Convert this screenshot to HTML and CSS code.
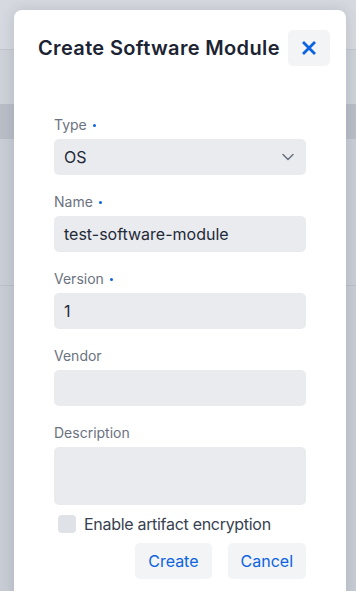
FILE: index.html
```html
<!DOCTYPE html>
<html>
<head>
<meta charset="utf-8">
<link rel="stylesheet" href="styles.css">
</head>
<body>
<div class="page">
  <div class="topbar"></div>
  <div class="subbar"></div>
  <div class="thead"></div>
  <div class="rows"></div>
  <div class="rest"></div>
</div>
<div class="modal">
  <div class="modal-header">
    <h2 class="title">Create Software Module</h2>
    <button class="close" aria-label="Close">
      <svg width="14" height="14" viewBox="0 0 14 14"><path d="M2 2 L12 12 M12 2 L2 12" stroke="#0b63e0" stroke-width="2.8" stroke-linecap="square" fill="none"/></svg>
    </button>
  </div>
  <form class="form">
    <div class="field">
      <label class="label">Type<span class="req"></span></label>
      <div class="input select">
        <span>OS</span>
        <svg width="12" height="8" viewBox="0 0 12 8"><path d="M1 1.5 L6 6.5 L11 1.5" stroke="#6b7280" stroke-width="1.5" fill="none" stroke-linecap="round" stroke-linejoin="round"/></svg>
      </div>
    </div>
    <div class="field">
      <label class="label">Name<span class="req"></span></label>
      <div class="input">test-software-module</div>
    </div>
    <div class="field">
      <label class="label">Version<span class="req"></span></label>
      <div class="input">1</div>
    </div>
    <div class="field">
      <label class="label">Vendor</label>
      <div class="input"></div>
    </div>
    <div class="field last">
      <label class="label">Description</label>
      <div class="input textarea"></div>
    </div>
    <div class="check-row">
      <span class="checkbox"></span>
      <span class="check-label">Enable artifact encryption</span>
    </div>
    <div class="actions">
      <button type="button" class="btn">Create</button>
      <button type="button" class="btn">Cancel</button>
    </div>
  </form>
</div>
</body>
</html>
```
FILE: styles.css
```css
* { box-sizing: border-box; }
html, body { margin: 0; padding: 0; }
body {
  width: 356px;
  height: 591px;
  overflow: hidden;
  position: relative;
  font-family: Inter, "Noto Sans", sans-serif;
}
.page {
  display: flex;
  flex-direction: column;
  height: 591px;
}
.topbar { height: 50px; background: #d6d9df; border-bottom: 1px solid #c2c6cd; }
.subbar { height: 54px; background: #cdd1d8; }
.thead { height: 35px; background: #b9bdc6; }
.rows { height: 147px; background: #c9cdd5; border-bottom: 1px solid #bcc0c8; }
.rest { flex: 1; background: #c8ccd4; }

.modal {
  position: absolute;
  top: 10px;
  left: 14px;
  width: 332px;
  bottom: -20px;
  background: #fff;
  border-radius: 8px;
  box-shadow: 0 0 14px rgba(60, 70, 90, 0.18);
}
.modal-header {
  display: flex;
  justify-content: space-between;
  align-items: center;
  padding: 20px 16px 0 24px;
}
.title {
  margin: 0;
  font-size: 20px;
  line-height: 36px;
  font-weight: 600;
  color: #1c2433;
  letter-spacing: 0.35px;
}
.close {
  width: 42px;
  height: 36px;
  border: 0;
  border-radius: 5px;
  background: #f3f4f6;
  display: flex;
  align-items: center;
  justify-content: center;
  padding: 0;
}
.form {
  padding: 49px 40px 0 40px;
  display: flex;
  flex-direction: column;
}
.field { display: flex; flex-direction: column; margin-bottom: 17px; }
.field.last { margin-bottom: 10px; }
.label {
  font-size: 14px;
  line-height: 20px;
  color: #6b7280;
  margin-bottom: 4px;
  display: flex;
  align-items: center;
}
.req {
  width: 3px;
  height: 3px;
  border-radius: 50%;
  background: #0b63e0;
  margin-left: 6px;
}
.input {
  height: 36px;
  background: #e9ebef;
  border-radius: 5px;
  padding: 0 10px;
  font-size: 16px;
  line-height: 36px;
  color: #1f2937;
}
.select {
  display: flex;
  align-items: center;
  justify-content: space-between;
  padding-right: 12px;
}
.textarea { height: 58px; }
.check-row {
  display: flex;
  align-items: center;
  padding-left: 4px;
  height: 18px;
}
.checkbox {
  width: 18px;
  height: 18px;
  border-radius: 4px;
  background: #dfe2e7;
  margin-right: 8px;
}
.check-label {
  font-size: 16px;
  color: #374151;
  line-height: 20px;
  letter-spacing: -0.3px;
}
.actions {
  display: flex;
  justify-content: flex-end;
  gap: 16px;
  margin-top: 10px;
}
.btn {
  height: 36px;
  padding: 0 13px;
  border: 0;
  border-radius: 5px;
  background: #f3f4f6;
  color: #0b63e0;
  font-family: Inter, "Noto Sans", sans-serif;
  font-size: 16px;
}
```
